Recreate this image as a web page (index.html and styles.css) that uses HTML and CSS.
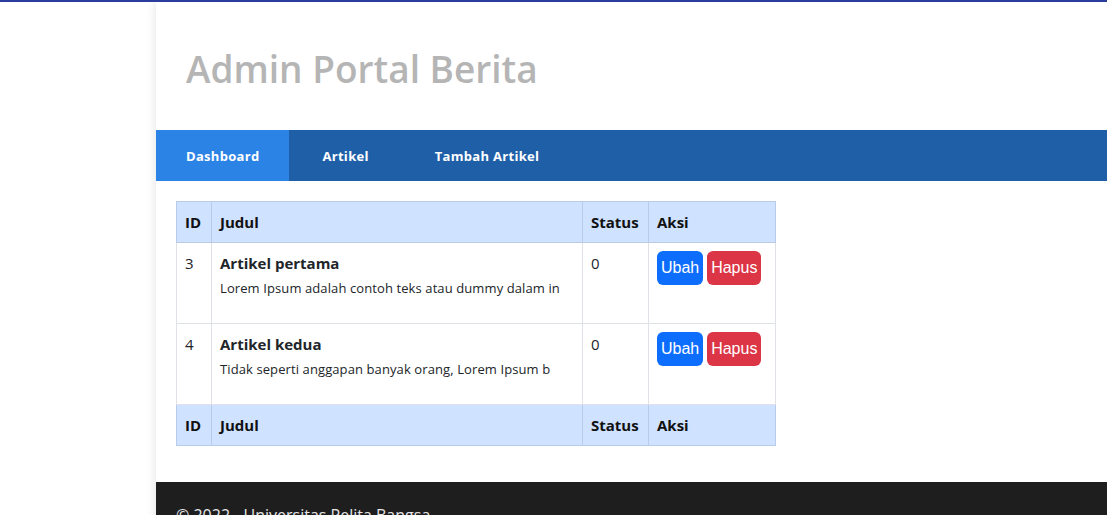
FILE: index.html
```html
<!DOCTYPE html>
<html lang="id">
<head>
<meta charset="utf-8">
<title>Admin Portal Berita</title>
<link rel="stylesheet" href="styles.css">
</head>
<body>
<div class="container">
  <header class="header">
    <h1>Admin Portal Berita</h1>
  </header>
  <nav class="nav">
    <a href="#" class="active">Dashboard</a>
    <a href="#">Artikel</a>
    <a href="#">Tambah Artikel</a>
  </nav>
  <section class="content">
    <table class="table">
      <thead>
        <tr><th class="c-id">ID</th><th class="c-judul">Judul</th><th class="c-status">Status</th><th class="c-aksi">Aksi</th></tr>
      </thead>
      <tbody>
        <tr>
          <td>3</td>
          <td><b class="title">Artikel pertama</b><p>Lorem Ipsum adalah contoh teks atau dummy dalam in</p></td>
          <td>0</td>
          <td><a class="btn btn-primary" href="#">Ubah</a> <a class="btn btn-danger" href="#">Hapus</a></td>
        </tr>
        <tr>
          <td>4</td>
          <td><b class="title">Artikel kedua</b><p>Tidak seperti anggapan banyak orang, Lorem Ipsum b</p></td>
          <td>0</td>
          <td><a class="btn btn-primary" href="#">Ubah</a> <a class="btn btn-danger" href="#">Hapus</a></td>
        </tr>
      </tbody>
      <tfoot>
        <tr><th>ID</th><th>Judul</th><th>Status</th><th>Aksi</th></tr>
      </tfoot>
    </table>
  </section>
  <footer class="footer">
    <p>&copy; 2022 - Universitas Pelita Bangsa</p>
  </footer>
</div>
</body>
</html>
```

FILE: styles.css
```css
html, body {
  margin: 0;
  padding: 0;
}
body {
  border-top: 2px solid #2a3c9c;
  background: #fff;
  font-family: "Open Sans", "Noto Sans", sans-serif;
  color: #212529;
  overflow: hidden;
  height: 513px;
}
.container {
  margin-left: 156px;
  width: 980px;
  background: #fff;
  box-shadow: 0 0 10px rgba(0,0,0,0.12);
  min-height: 520px;
}
.header {
  height: 128px;
  display: flex;
  align-items: center;
  padding-left: 30px;
}
.header h1 {
  margin: 0;
  font-size: 37px;
  font-weight: 600;
  color: #b5b5b5;
  letter-spacing: 0;
  position: relative;
  top: 2px;
}
.nav {
  display: flex;
  height: 51px;
  background: #1f5fa8;
}
.nav a {
  display: flex;
  align-items: center;
  padding: 0 33px;
  color: #fff;
  font-weight: 700;
  font-size: 13px;
  letter-spacing: 0.3px;
  text-decoration: none;
}
.nav a.active {
  background: #2b83e6;
  padding: 0 30px;
}
.content {
  padding: 20px 20px 36px;
}
.table {
  border-collapse: collapse;
  width: 600px;
  font-size: 15px;
}
.table th, .table td {
  border: 1px solid #dee2e6;
  padding: 8px;
  text-align: left;
  vertical-align: top;
  line-height: 24px;
}
.table thead th, .table tfoot th {
  background: #cfe2ff;
  border-color: #b9cbe6;
  font-weight: 700;
  color: #111;
}
.c-id { width: 18px; }
.c-status { width: 49px; }
.c-aksi { width: 110px; }
.table td {
  height: 64px;
}
.title {
  display: block;
  font-size: 15px;
  font-weight: 700;
  line-height: 24px;
}
.table p {
  margin: 3px 0 0;
  font-size: 13px;
  line-height: 20px;
  letter-spacing: 0.1px;
}
.btn {
  display: inline-block;
  padding: 0 4px;
  height: 34px;
  line-height: 34px;
  font-family: "Liberation Sans", "Noto Sans", sans-serif;
  font-size: 16px;
  font-weight: 300;
  color: #fff;
  text-decoration: none;
  border-radius: 6px;
}
.btn-primary { background: #0d6efd; }
.btn-danger { background: #dc3545; }
.footer {
  background: #1e1e1e;
  color: #e6e6e6;
  padding: 22px 20px;
  font-size: 16px;
}
.footer p { margin: 0; }
```
